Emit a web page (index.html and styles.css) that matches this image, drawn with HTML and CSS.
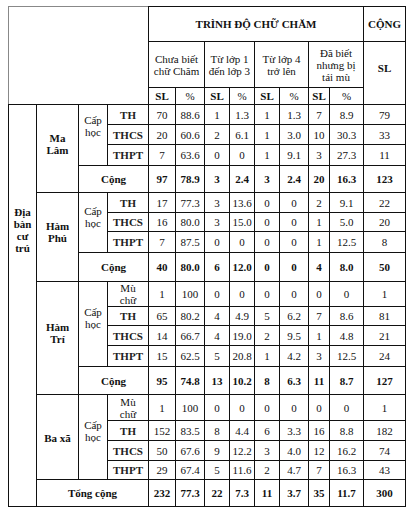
FILE: index.html
```html
<!DOCTYPE html>
<html lang="vi">
<head>
<meta charset="utf-8">
<title>Trình độ chữ Chăm</title>
<link rel="stylesheet" href="styles.css">
</head>
<body>
<table class="grid">
  <colgroup>
    <col class="c28"><col class="c42"><col class="c29"><col class="c41">
    <col class="c27"><col class="c29"><col class="c25"><col class="c25">
    <col class="c25"><col class="c29"><col class="c21"><col class="c34"><col class="c42">
  </colgroup>
  <tr class="h35">
    <td class="corner" colspan="4" rowspan="3"></td>
    <td class="b" colspan="8">TRÌNH ĐỘ CHỮ CHĂM</td>
    <td class="b">CỘNG</td>
  </tr>
  <tr class="h46">
    <td colspan="2">Chưa biết<br>chữ Chăm</td>
    <td colspan="2">Từ lớp 1<br>đến lớp 3</td>
    <td colspan="2">Từ lớp 4<br>trở lên</td>
    <td colspan="2">Đã biết<br>nhưng bị<br>tái mù</td>
    <td class="b sl" rowspan="2">SL</td>
  </tr>
  <tr class="h17">
    <td class="b">SL</td><td>%</td><td class="b">SL</td><td>%</td>
    <td class="b">SL</td><td>%</td><td class="b">SL</td><td>%</td>
  </tr>

  <tr class="h20">
    <td class="b dia" rowspan="19">Địa<br>bàn<br>cư<br>trú</td>
    <td class="b place" rowspan="4">Ma<br>Lâm</td>
    <td class="cap capml" rowspan="3">Cấp<br>học</td>
    <td class="lv">TH</td><td>70</td><td>88.6</td><td>1</td><td>1.3</td><td>1</td><td>1.3</td><td>7</td><td>8.9</td><td>79</td>
  </tr>
  <tr class="h20">
    <td class="lv">THCS</td><td>20</td><td>60.6</td><td>2</td><td>6.1</td><td>1</td><td>3.0</td><td>10</td><td>30.3</td><td>33</td>
  </tr>
  <tr class="h21">
    <td class="lv">THPT</td><td>7</td><td>63.6</td><td>0</td><td>0</td><td>1</td><td>9.1</td><td>3</td><td>27.3</td><td>11</td>
  </tr>
  <tr class="h27 b">
    <td colspan="2">Cộng</td><td>97</td><td>78.9</td><td>3</td><td>2.4</td><td>3</td><td>2.4</td><td>20</td><td>16.3</td><td>123</td>
  </tr>

  <tr class="h20">
    <td class="b place" rowspan="4">Hàm<br>Phú</td>
    <td class="cap" rowspan="3">Cấp<br>học</td>
    <td class="lv">TH</td><td>17</td><td>77.3</td><td>3</td><td>13.6</td><td>0</td><td>0</td><td>2</td><td>9.1</td><td>22</td>
  </tr>
  <tr class="h19">
    <td class="lv">THCS</td><td>16</td><td>80.0</td><td>3</td><td>15.0</td><td>0</td><td>0</td><td>1</td><td>5.0</td><td>20</td>
  </tr>
  <tr class="h21">
    <td class="lv">THPT</td><td>7</td><td>87.5</td><td>0</td><td>0</td><td>0</td><td>0</td><td>1</td><td>12.5</td><td>8</td>
  </tr>
  <tr class="h29 b">
    <td colspan="2">Cộng</td><td>40</td><td>80.0</td><td>6</td><td>12.0</td><td>0</td><td>0</td><td>4</td><td>8.0</td><td>50</td>
  </tr>

  <tr class="h24">
    <td class="b place" rowspan="5">Hàm<br>Trí</td>
    <td class="cap" rowspan="4">Cấp<br>học</td>
    <td>Mù<br>chữ</td><td>1</td><td>100</td><td>0</td><td>0</td><td>0</td><td>0</td><td>0</td><td>0</td><td>1</td>
  </tr>
  <tr class="h19">
    <td class="lv">TH</td><td>65</td><td>80.2</td><td>4</td><td>4.9</td><td>5</td><td>6.2</td><td>7</td><td>8.6</td><td>81</td>
  </tr>
  <tr class="h20">
    <td class="lv">THCS</td><td>14</td><td>66.7</td><td>4</td><td>19.0</td><td>2</td><td>9.5</td><td>1</td><td>4.8</td><td>21</td>
  </tr>
  <tr class="h21">
    <td class="lv">THPT</td><td>15</td><td>62.5</td><td>5</td><td>20.8</td><td>1</td><td>4.2</td><td>3</td><td>12.5</td><td>24</td>
  </tr>
  <tr class="h28 b">
    <td colspan="2">Cộng</td><td>95</td><td>74.8</td><td>13</td><td>10.2</td><td>8</td><td>6.3</td><td>11</td><td>8.7</td><td>127</td>
  </tr>

  <tr class="h26">
    <td class="b place2" rowspan="4">Ba xã</td>
    <td class="cap" rowspan="4">Cấp<br>học</td>
    <td>Mù<br>chữ</td><td>1</td><td>100</td><td>0</td><td>0</td><td>0</td><td>0</td><td>0</td><td>0</td><td>1</td>
  </tr>
  <tr class="h20">
    <td class="lv">TH</td><td>152</td><td>83.5</td><td>8</td><td>4.4</td><td>6</td><td>3.3</td><td>16</td><td>8.8</td><td>182</td>
  </tr>
  <tr class="h20">
    <td class="lv">THCS</td><td>50</td><td>67.6</td><td>9</td><td>12.2</td><td>3</td><td>4.0</td><td>12</td><td>16.2</td><td>74</td>
  </tr>
  <tr class="h19">
    <td class="lv">THPT</td><td>29</td><td>67.4</td><td>5</td><td>11.6</td><td>2</td><td>4.7</td><td>7</td><td>16.3</td><td>43</td>
  </tr>
  <tr class="h27 b">
    <td colspan="3">Tổng cộng</td><td>232</td><td>77.3</td><td>22</td><td>7.3</td><td>11</td><td>3.7</td><td>35</td><td>11.7</td><td>300</td>
  </tr>
</table>
</body>
</html>
```

FILE: styles.css
```css
html, body {
  background: #ffffff;
}
body {
  margin: 6px 0 0 8px;
  font-family: "Liberation Serif", "Times New Roman", "DejaVu Serif", serif;
  font-size: 11px;
  line-height: 12px;
  color: #111111;
}
.grid {
  border-collapse: collapse;
  table-layout: fixed;
  width: 397px;
}
.grid td {
  border: 1px solid #111111;
  padding: 0;
  text-align: center;
  vertical-align: middle;
  overflow: hidden;
}
.c21 { width: 21px; }
.c25 { width: 25px; }
.c27 { width: 27px; }
.c28 { width: 28px; }
.c29 { width: 29px; }
.c34 { width: 34px; }
.c41 { width: 41px; }
.c42 { width: 42px; }

.h17 { height: 17px; }
.h19 { height: 19px; }
.h20 { height: 20px; }
.h21 { height: 21px; }
.h24 { height: 24px; }
.h26 { height: 26px; }
.h27 { height: 27px; }
.h28 { height: 28px; }
.h29 { height: 29px; }
.h35 { height: 35px; }
.h46 { height: 46px; }

.b { font-weight: bold; }
.lv { font-weight: bold; color: #222222; }

.grid td.corner {
  border-top-color: #888888;
  border-left-color: #888888;
}
.grid td.sl {
  padding-bottom: 10px;
}
.grid td.dia {
  vertical-align: top;
  padding-top: 101px;
}
.grid td.place {
  padding-bottom: 10px;
}
.grid td.place2 {
  padding-top: 2px;
}
.grid td.cap {
  padding-bottom: 12px;
}
.grid td.capml {
  padding-bottom: 18px;
}
```
